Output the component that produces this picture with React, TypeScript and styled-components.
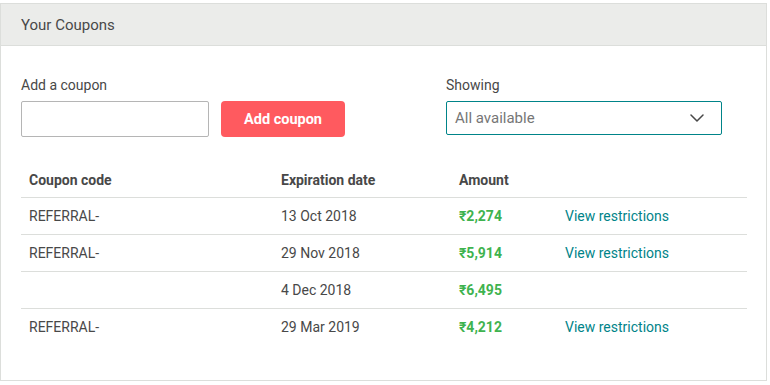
import React from "react";
import styled, { createGlobalStyle } from "styled-components";

const Global = createGlobalStyle`
  html, body { margin: 0; padding: 0; background: #ffffff; }
  body { font-family: "Roboto", "Noto Sans", "DejaVu Sans", sans-serif; color: #484848; }
  * { box-sizing: border-box; }
`;

const Card = styled.section`
  margin-top: 3px;
  width: 767px;
  height: 378px;
  border: 1px solid #dcdedb;
  display: flex;
  flex-direction: column;
`;

const Header = styled.header`
  height: 42px;
  background: #ebecea;
  border-bottom: 1px solid #dcdedb;
  display: flex;
  align-items: center;
  padding-left: 20px;
  font-size: 15px;
  color: #484848;
`;

const Body = styled.div`
  padding: 31px 19px 0 20px;
  display: flex;
  flex-direction: column;
`;

const Controls = styled.div`
  display: grid;
  grid-template-columns: 425px 276px;
  align-items: end;
`;

const Field = styled.div`
  display: flex;
  flex-direction: column;
  gap: 8px;
`;

const Label = styled.label`
  font-size: 14px;
  color: #484848;
`;

const Row = styled.div`
  display: flex;
  gap: 12px;
  align-items: center;
`;

const Input = styled.input`
  width: 188px;
  height: 36px;
  border: 1px solid #b5b5b5;
  border-radius: 2px;
  font-size: 14px;
  padding: 0 8px;
  outline: none;
`;

const Button = styled.button`
  width: 124px;
  height: 36px;
  background: #ff5a5f;
  border: none;
  border-radius: 4px;
  color: #ffffff;
  font-family: inherit;
  font-weight: 700;
  font-size: 14.5px;
  cursor: pointer;
`;

const Select = styled.div`
  height: 34px;
  border: 1px solid #008489;
  border-radius: 2px;
  display: flex;
  align-items: center;
  justify-content: space-between;
  padding: 0 17px 0 8px;
  font-size: 15px;
  color: #767676;
  margin-bottom: 2px;
`;

const Table = styled.div`
  margin-top: 33px;
  display: flex;
  flex-direction: column;
  width: 726px;
`;

const TRow = styled.div<{ $head?: boolean; $last?: boolean }>`
  display: grid;
  grid-template-columns: 252px 178px 106px 1fr;
  height: ${(p) => (p.$head ? "28px" : "37px")};
  align-items: ${(p) => (p.$head ? "start" : "center")};
  padding-top: ${(p) => (p.$head ? "2px" : "0")};
  border-bottom: 1px solid ${(p) => (p.$last ? "transparent" : "#dcdedb")};
  padding-left: 8px;
  font-size: 14px;
  font-weight: ${(p) => (p.$head ? 700 : 400)};
  color: #484848;
`;

const Amount = styled.span`
  color: #3fb34f;
  font-weight: 700;
`;

const Link = styled.a`
  color: #008489;
  text-decoration: none;
  font-size: 14px;
`;

const rows = [
  { code: "REFERRAL-", date: "13 Oct 2018", amount: "₹2,274", link: true },
  { code: "REFERRAL-", date: "29 Nov 2018", amount: "₹5,914", link: true },
  { code: "", date: "4 Dec 2018", amount: "₹6,495", link: false },
  { code: "REFERRAL-", date: "29 Mar 2019", amount: "₹4,212", link: true },
];

export default function App() {
  return (
    <>
      <Global />
      <Card>
        <Header>Your Coupons</Header>
        <Body>
          <Controls>
            <Field>
              <Label>Add a coupon</Label>
              <Row>
                <Input />
                <Button>Add coupon</Button>
              </Row>
            </Field>
            <Field>
              <Label>Showing</Label>
              <Select>
                <span>All available</span>
                <svg width="14" height="8" viewBox="0 0 14 8" fill="none">
                  <path d="M1 1l6 6 6-6" stroke="#484848" strokeWidth="1.5" strokeLinecap="round" strokeLinejoin="round" />
                </svg>
              </Select>
            </Field>
          </Controls>
          <Table>
            <TRow $head>
              <span>Coupon code</span>
              <span>Expiration date</span>
              <span>Amount</span>
              <span />
            </TRow>
            {rows.map((r, i) => (
              <TRow key={i} $last={i === rows.length - 1}>
                <span>{r.code}</span>
                <span>{r.date}</span>
                <Amount>{r.amount}</Amount>
                <span>{r.link ? <Link href="#">View restrictions</Link> : null}</span>
              </TRow>
            ))}
          </Table>
        </Body>
      </Card>
    </>
  );
}
